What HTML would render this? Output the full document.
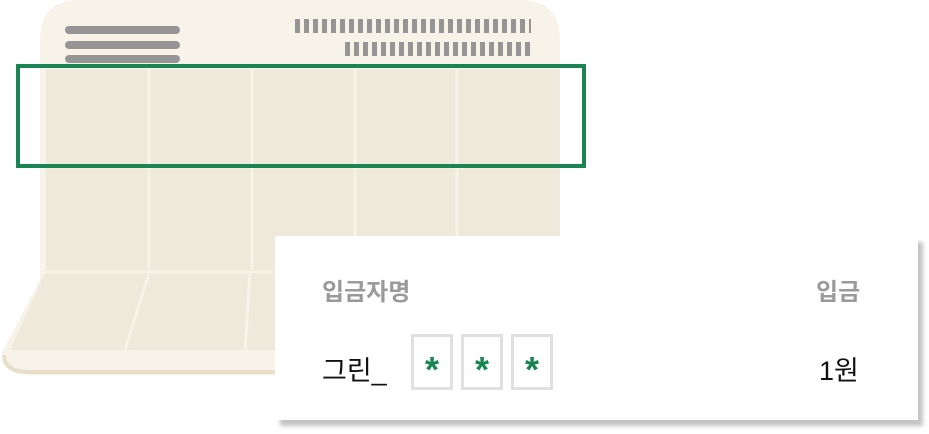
<!DOCTYPE html>
<html><head><meta charset="utf-8"><style>
body{margin:0;width:929px;height:434px;background:#fff;position:relative;overflow:hidden;font-family:"Liberation Sans","Noto Sans CJK KR",sans-serif}
.a{position:absolute}
.b{position:absolute;top:334px;width:36px;height:50px;border:3px solid #e0e0e0;color:#1a8552;font-size:36px;font-weight:bold;text-align:center;line-height:66px}
</style></head><body>
<svg class="a" style="left:0;top:0" width="929" height="434">
 <path d="M2 352 L40 280 L40 40 Q40 0 80 0 L520 0 Q560 0 560 40 L560 280 L590 352 Q590 375 560 375 L30 375 Q2 375 2 352Z" fill="#f7f3e8"/>
 <path d="M4 355 Q4 372 30 372 L560 372" stroke="#e8dfca" stroke-width="4" fill="none"/>
 <rect x="46" y="69" width="514" height="202" fill="#efe9dc"/>
 <g stroke="#f7f3e8" stroke-width="3">
  <line x1="149" y1="69" x2="149" y2="271"/><line x1="252" y1="69" x2="252" y2="271"/>
  <line x1="355" y1="69" x2="355" y2="271"/><line x1="457" y1="69" x2="457" y2="271"/>
  <line x1="46" y1="167" x2="560" y2="167"/>
 </g>
 <path d="M45 273 L275 273 L275 350 L10 350Z" fill="#efe9dc"/>
 <g stroke="#f7f3e8" stroke-width="3"><line x1="149" y1="273" x2="125" y2="350"/><line x1="250" y1="273" x2="245" y2="350"/></g>
 <g stroke="#959595" stroke-width="8" stroke-linecap="round">
  <line x1="69" y1="30" x2="176" y2="30"/><line x1="69" y1="45" x2="176" y2="45"/><line x1="69" y1="59" x2="176" y2="59"/>
 </g>
 <line x1="295" y1="26" x2="531" y2="26" stroke="#959595" stroke-width="14" stroke-dasharray="5 4"/>
 <line x1="345" y1="49" x2="531" y2="49" stroke="#959595" stroke-width="14" stroke-dasharray="5 4"/>
 <rect x="18" y="66" width="566" height="100" fill="none" stroke="#1a8552" stroke-width="4"/>
</svg>
<div class="a" style="left:275px;top:236px;width:643px;height:184px;background:#fff;box-shadow:5px 6px 4px #c4c4c4"></div>
<div class="a" style="left:322px;top:272px;font-size:24px;font-weight:bold;color:#9a9a9a">입금자명</div>
<div class="a" style="left:816px;top:272px;font-size:24px;font-weight:bold;color:#9a9a9a">입금</div>
<div class="a" style="left:322px;top:349px;font-size:27px;color:#111">그린_</div>
<div class="a" style="left:819px;top:349px;font-size:27px;color:#111">1원</div>
<div class="b" style="left:411px">*</div>
<div class="b" style="left:461px">*</div>
<div class="b" style="left:511px">*</div>
</body></html>
